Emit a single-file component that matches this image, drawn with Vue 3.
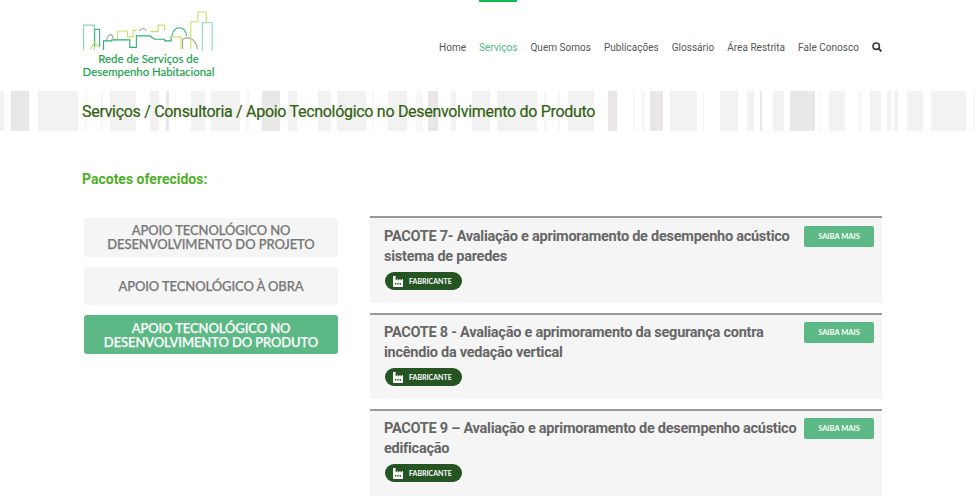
<script setup>
const nav = ['Home', 'Serviços', 'Quem Somos', 'Publicações', 'Glossário', 'Área Restrita', 'Fale Conosco']
const a = '#e9e8e6', b = '#f3f2f2', c = '#f8f7f7'
const raw = [
  [0,4,b],[11,29,a],[38,78,b],[85,87,c],[101,103,c],[110,136,b],[150,159,b],[166,169,a],[175,176,c],[191,205,b],
  [211,240,b],[246,249,c],[262,280,a],[288,297,b],[318,331,b],[337,366,b],[372,374,c],[388,407,b],[416,423,c],[428,438,a],
  [451,456,b],[472,490,b],[497,537,b],[544,547,c],[558,560,c],[568,594,b],[608,617,a],[633,635,c],[641,645,c],[650,663,a],
  [670,697,b],[703,704,c],[720,738,b],[747,754,b],[760,762,a],[773,784,b],[790,815,a],[819,821,c],[829,845,b],[858,862,c],
  [870,881,b],[887,891,b],[894,898,b],[907,923,b],[931,966,b],[973,975,c]
]
let prev = 0
const stripes = raw.map(([s, e, col]) => {
  const st = { marginLeft: s - prev + 'px', width: e - s + 'px', background: col }
  prev = e
  return st
})
const sides = [
  { t: 'APOIO TECNOLÓGICO NO DESENVOLVIMENTO DO PROJETO' },
  { t: 'APOIO TECNOLÓGICO À OBRA' },
  { t: 'APOIO TECNOLÓGICO NO DESENVOLVIMENTO DO PRODUTO', active: true }
]
const cards = [
  'PACOTE 7- Avaliação e aprimoramento de desempenho acústico sistema de paredes',
  'PACOTE 8 - Avaliação e aprimoramento da segurança contra incêndio da vedação vertical',
  'PACOTE 9 – Avaliação e aprimoramento de desempenho acústico edificação'
]
</script>

<template>
  <div class="page">
    <header class="header">
      <div class="logo">
        <svg viewBox="66 30 400 128" width="133" height="42" fill="none" stroke-width="3.4">
          <path d="M68 152V76H101V152" stroke="#8ad9b5" />
          <path d="M102 142V89H117V142" stroke="#3db585" />
          <path d="M89 150L101 129L116 144" stroke="#c9df6a" />
          <path d="M138 124C142 100 155 100 159 118" stroke="#a3a39a" />
          <path d="M129 152V124H154V121H209V144H229V109H270L285 119H315V124H335V109" stroke="#2eb070" />
          <path d="M172 118V94H202V112H219V92H229" stroke="#c9df6a" />
          <path d="M239 94C245 84 255 84 259 94" stroke="#a3a39a" />
          <path d="M270 96H295V76H315V94" stroke="#c9df6a" />
          <path d="M338 109C340 76 380 76 382 109" stroke="#2eb070" />
          <path d="M335 112H365V149" stroke="#c9df6a" />
          <path d="M370 149V119C385 110 410 115 415 149" stroke="#a3a39a" />
          <path d="M395 149V66H417V36H442V69" stroke="#c9df6a" />
          <path d="M430 154V69H460V154" stroke="#8ad9b5" />
        </svg>
        <span class="logo-line">Rede de Serviços de</span>
        <span class="logo-line">Desempenho Habitacional</span>
      </div>
      <nav class="nav">
        <a v-for="n in nav" :key="n" class="nav-link" :class="{ on: n === 'Serviços' }">{{ n }}</a>
        <svg class="search" width="10" height="10" viewBox="0 0 10 10" fill="none" stroke="#3c3c3c">
          <circle cx="4.2" cy="4.2" r="3.2" stroke-width="1.6" />
          <path d="M6.6 6.6L9.4 9.4" stroke-width="2" />
        </svg>
      </nav>
    </header>

    <div class="banner">
      <div class="stripes"><i v-for="(s, i) in stripes" :key="i" :style="s"></i></div>
      <h1>Serviços / Consultoria / Apoio Tecnológico no Desenvolvimento do Produto</h1>
    </div>

    <h2>Pacotes oferecidos:</h2>

    <main class="cols">
      <aside class="side">
        <a v-for="s in sides" :key="s.t" class="side-btn" :class="{ active: s.active }">{{ s.t }}</a>
      </aside>
      <section class="list">
        <article v-for="c in cards" :key="c" class="card">
          <div class="body">
            <h3>{{ c }}</h3>
            <span class="badge">
              <svg width="10" height="12" viewBox="0 0 10 12" fill="#fff">
                <path d="M0 12V1H2.6V5.4L5 3.8V5.4L7.5 3.8V5.4L10 3.8V12Z" />
                <path d="M2 8h1.4v1.6H2zM4.3 8h1.4v1.6H4.3zM6.6 8H8v1.6H6.6z" fill="#265524" />
              </svg>
              FABRICANTE
            </span>
          </div>
          <a class="more">SAIBA MAIS</a>
        </article>
      </section>
    </main>
  </div>
</template>

<style>
html, body { background: #fff; }
</style>

<style scoped>
.page { width: 980px; font-family: Roboto, sans-serif; }
.header { height: 91px; padding: 0 98px 0 82px; display: flex; justify-content: space-between; box-sizing: border-box; }
.logo { width: 133px; margin-top: 10px; display: flex; flex-direction: column; align-items: center; }
.logo svg { display: block; flex: none; }
.logo-line { font-family: Lato, sans-serif; font-size: 11.4px; line-height: 13px; color: #16a049; white-space: nowrap; -webkit-text-stroke: 0.15px #16a049; }
.nav { display: flex; align-items: flex-start; gap: 13px; }
.nav-link { font-size: 10px; letter-spacing: 0.03px; color: #555; line-height: 13px; padding-top: 39px; border-top: 2px solid transparent; }
.nav-link.on { color: #4dbb7c; border-top-color: #12b850; }
.search { margin-top: 42px; }
.banner { position: relative; height: 40px; }
.stripes { position: absolute; inset: 0; display: flex; }
.stripes i { display: block; flex: none; height: 40px; }
h1 { position: relative; margin: 0; padding: 1px 0 0 82px; font-size: 16px; font-weight: 400; letter-spacing: -0.3px; line-height: 39px; color: #2f5f10; -webkit-text-stroke: 0.2px #2f5f10; }
h2 { margin: 39px 0 0 82px; font-size: 14px; font-weight: 700; line-height: 18px; color: #4fb028; }
.cols { display: flex; padding: 28px 98px 0 84px; gap: 32px; }
.side { width: 254px; flex: none; display: flex; flex-direction: column; gap: 10.1px; padding-top: 2px; }
.side-btn { height: 38.6px; box-sizing: border-box; display: flex; align-items: center; justify-content: center; text-align: center; padding: 0 12px; background: #f5f5f5; border-radius: 3px; font-family: Lato, sans-serif; font-size: 13px; letter-spacing: -0.1px; font-weight: 500; line-height: 14px; color: #777; -webkit-text-stroke: 0.25px currentColor; }
.side-btn.active { background: #5cb985; color: #fff; }
.list { flex: 1; display: flex; flex-direction: column; gap: 10px; }
.card { height: 86.5px; box-sizing: border-box; border-top: 2px solid #999; background: #f5f5f5; display: flex; justify-content: space-between; padding: 8px 8px 0 14px; }
.card + .card { padding-top: 7px; }
.body { width: 418px; }
h3 { margin: 1px 0 0; font-size: 14.5px; font-weight: 700; letter-spacing: -0.25px; line-height: 20px; color: #666; }
.badge { margin: 5px 0 0 1px; width: 77px; height: 18px; border-radius: 9px; background: #265524; color: #fff; font-family: Lato, sans-serif; font-size: 7px; font-weight: 700; display: flex; align-items: center; gap: 6px; padding-left: 8px; box-sizing: border-box; }
.more { width: 70px; height: 21px; background: #5cb985; border-radius: 2px; color: #fff; font-family: Lato, sans-serif; font-size: 7.5px; font-weight: 700; display: flex; align-items: center; justify-content: center; }
</style>
